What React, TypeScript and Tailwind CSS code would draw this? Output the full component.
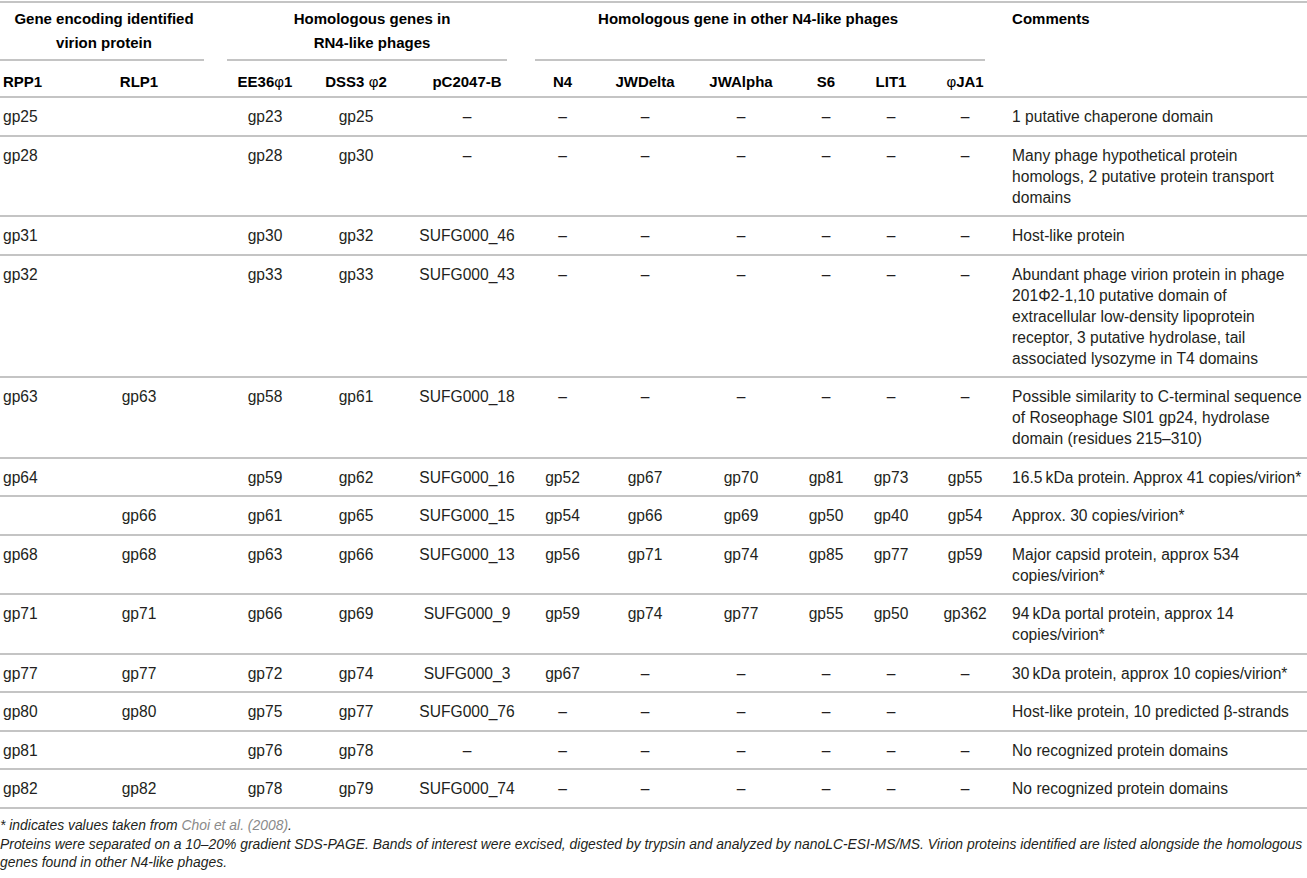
import React from 'react';

const D = '–';

const colWidths = ['w-[76px]', 'w-[139px]', 'w-[95px]', 'w-[101px]', 'w-[110px]', 'w-[83px]', 'w-[89px]', 'w-[91px]', 'w-[75px]', 'w-[69px]', 'w-[69px]', 'w-[310px]'];

// nudges so each column's text sits where the reference puts it
const colPad = [
  'pl-[3px] text-left',
  'pr-[13px] text-center',
  'pl-[5px] text-center',
  'pr-[9px] text-center',
  'pl-[2px] text-center',
  'text-center',
  'pr-[7px] text-center',
  'pl-[5px] text-center',
  'pl-[9px] text-center',
  'pr-[5px] text-center',
  'pl-[5px] text-center',
  'pl-[15px] text-left',
];

const rows: { cells: string[]; comment: string[] }[] = [
  { cells: ['gp25', '', 'gp23', 'gp25', D, D, D, D, D, D, D], comment: ['1 putative chaperone domain'] },
  {
    cells: ['gp28', '', 'gp28', 'gp30', D, D, D, D, D, D, D],
    comment: ['Many phage hypothetical protein', 'homologs, 2 putative protein transport', 'domains'],
  },
  { cells: ['gp31', '', 'gp30', 'gp32', 'SUFG000_46', D, D, D, D, D, D], comment: ['Host-like protein'] },
  {
    cells: ['gp32', '', 'gp33', 'gp33', 'SUFG000_43', D, D, D, D, D, D],
    comment: [
      'Abundant phage virion protein in phage',
      '201Φ2-1,10 putative domain of',
      'extracellular low-density lipoprotein',
      'receptor, 3 putative hydrolase, tail',
      'associated lysozyme in T4 domains',
    ],
  },
  {
    cells: ['gp63', 'gp63', 'gp58', 'gp61', 'SUFG000_18', D, D, D, D, D, D],
    comment: ['Possible similarity to C-terminal sequence', 'of Roseophage SI01 gp24, hydrolase', 'domain (residues 215–310)'],
  },
  {
    cells: ['gp64', '', 'gp59', 'gp62', 'SUFG000_16', 'gp52', 'gp67', 'gp70', 'gp81', 'gp73', 'gp55'],
    comment: ['16.5\u2009kDa protein. Approx 41 copies/virion*'],
  },
  {
    cells: ['', 'gp66', 'gp61', 'gp65', 'SUFG000_15', 'gp54', 'gp66', 'gp69', 'gp50', 'gp40', 'gp54'],
    comment: ['Approx. 30 copies/virion*'],
  },
  {
    cells: ['gp68', 'gp68', 'gp63', 'gp66', 'SUFG000_13', 'gp56', 'gp71', 'gp74', 'gp85', 'gp77', 'gp59'],
    comment: ['Major capsid protein, approx 534', 'copies/virion*'],
  },
  {
    cells: ['gp71', 'gp71', 'gp66', 'gp69', 'SUFG000_9', 'gp59', 'gp74', 'gp77', 'gp55', 'gp50', 'gp362'],
    comment: ['94\u2009kDa portal protein, approx 14', 'copies/virion*'],
  },
  {
    cells: ['gp77', 'gp77', 'gp72', 'gp74', 'SUFG000_3', 'gp67', D, D, D, D, D],
    comment: ['30\u2009kDa protein, approx 10 copies/virion*'],
  },
  {
    cells: ['gp80', 'gp80', 'gp75', 'gp77', 'SUFG000_76', D, D, D, D, D, ''],
    comment: ['Host-like protein, 10 predicted β-strands'],
  },
  { cells: ['gp81', '', 'gp76', 'gp78', D, D, D, D, D, D, D], comment: ['No recognized protein domains'] },
  { cells: ['gp82', 'gp82', 'gp78', 'gp79', 'SUFG000_74', D, D, D, D, D, D], comment: ['No recognized protein domains'] },
];

const phi = <span className="font-normal">φ</span>;

const subHeads: React.ReactNode[] = [
  'RPP1',
  'RLP1',
  <>EE36{phi}1</>,
  <>DSS3 {phi}2</>,
  'pC2047-B',
  'N4',
  'JWDelta',
  'JWAlpha',
  'S6',
  'LIT1',
  <>{phi}JA1</>,
];

export default function App() {
  return (
    <div className="w-[1307px] min-h-[878px] bg-white pt-[1px] font-['Liberation_Sans',Arial,sans-serif] text-[#231f20]">
      <table className="w-full table-fixed border-collapse border-t-2 border-[#c4c4c4]">
        <colgroup>
          {colWidths.map((w, i) => (
            <col key={i} className={w} />
          ))}
        </colgroup>
        <thead className="text-[15px] font-bold text-black">
          <tr>
            <th colSpan={2} className="p-0 pt-[4px] align-top font-bold">
              <div className="mr-[11px] border-b-2 border-[#c4c4c4] pb-[4px] pl-[4px] text-center leading-[24px]">
                Gene encoding identified
                <br />
                virion protein
              </div>
            </th>
            <th colSpan={3} className="p-0 pt-[4px] align-top font-bold">
              <div className="ml-[12px] mr-[14px] border-b-2 border-[#c4c4c4] pb-[4px] pl-[10px] text-center leading-[24px]">
                Homologous genes in
                <br />
                RN4-like phages
              </div>
            </th>
            <th colSpan={6} className="p-0 pt-[4px] align-top font-bold">
              <div className="ml-[14px] mr-[12px] border-b-2 border-[#c4c4c4] pb-[28px] pr-[24px] text-center leading-[24px]">
                Homologous gene in other N4-like phages
              </div>
            </th>
            <th rowSpan={2} className="border-b-2 border-[#c4c4c4] p-0 pl-[15px] pt-[4px] text-left align-top leading-[24px] font-bold">
              Comments
            </th>
          </tr>
          <tr>
            {subHeads.map((h, i) => (
              <th
                key={i}
                className={`whitespace-nowrap border-b-2 border-[#c4c4c4] pt-[9.5px] pb-[4.5px] align-top leading-[21px] font-bold ${colPad[i]}`}
              >
                {h}
              </th>
            ))}
          </tr>
        </thead>
        <tbody className="text-[15.6px] leading-[21px]">
          {rows.map((r, ri) => (
            <tr key={ri}>
              {r.cells.map((c, ci) => (
                <td
                  key={ci}
                  className={`whitespace-nowrap border-b-2 border-[#c4c4c4] pt-[8px] pb-[7.5px] align-top ${colPad[ci]}`}
                >
                  {c}
                </td>
              ))}
              <td className={`whitespace-nowrap border-b-2 border-[#c4c4c4] pt-[8px] pb-[7.5px] align-top ${colPad[11]}`}>
                {r.comment.map((line, li) => (
                  <div key={li}>{line}</div>
                ))}
              </td>
            </tr>
          ))}
        </tbody>
      </table>
      <div className="mt-[7.5px] text-[13.9px] italic leading-[18.5px] text-[#231f20]">
        <p>
          * indicates values taken from <span className="text-[#8a8a8a]">Choi et al. (2008)</span>.
        </p>
        <p>
          Proteins were separated on a 10–20% gradient SDS-PAGE. Bands of interest were excised, digested by trypsin and analyzed by
          nanoLC-ESI-MS/MS. Virion proteins identified are listed alongside the homologous
          <br />
          genes found in other N4-like phages.
        </p>
      </div>
    </div>
  );
}
